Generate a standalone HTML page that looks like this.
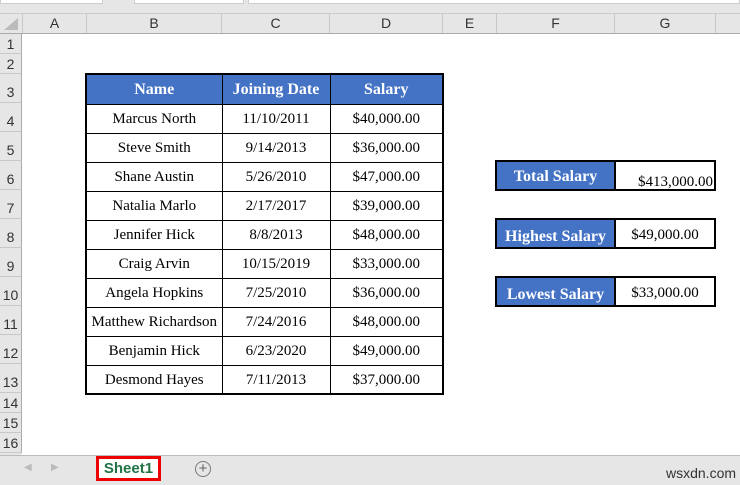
<!DOCTYPE html>
<html><head><style>
*{margin:0;padding:0;box-sizing:border-box}
body{width:740px;height:485px;overflow:hidden;background:#fff;position:relative;font-family:"Liberation Sans",sans-serif}
.a{position:absolute}
.ch{position:absolute;top:14px;height:19px;font-size:14px;color:#333;text-align:center;line-height:19px;border-right:1px solid #c8c8c8}
.rh{position:absolute;left:0;width:22px;font-size:14px;color:#333;text-align:center;border-bottom:1px solid #c8c8c8;background:#e6e6e6;border-right:1px solid #aaa}
table{border-collapse:collapse;position:absolute;font-family:"Liberation Serif",serif;font-size:15px}
td{border:1px solid #000;text-align:center;padding:2px 0 0}
th{background:#4472c4;color:#fff;font-weight:bold;font-size:16px;border:1px solid #000;padding-top:2px}
.box{position:absolute;left:495px;width:221px;border:2px solid #000;display:flex;font-family:"Liberation Serif",serif}
.box .l{width:119px;background:#4472c4;color:#fff;font-weight:bold;font-size:16px;text-align:center;border-right:2px solid #000}
.box .v{flex:1;font-size:15px;text-align:center}
</style></head><body>
<div class="a" style="left:0;top:0;width:740px;height:14px;background:#e6e6e6;border-bottom:1px solid #ccc"></div>
<div class="a" style="left:0;top:0;width:103px;height:4px;background:#fff;border:1px solid #ccc;border-top:none"></div>
<div class="a" style="left:134px;top:0;width:110px;height:4px;background:#fff;border:1px solid #ccc;border-top:none"></div>
<div class="a" style="left:248px;top:0;width:492px;height:4px;background:#fff;border:1px solid #ccc;border-top:none"></div>
<div class="a" style="left:0;top:14px;width:740px;height:20px;background:#e6e6e6;border-bottom:1px solid #aaa"></div>
<div class="a" style="left:4px;top:18px;width:0;height:0;border-left:14px solid transparent;border-bottom:12px solid #bbb"></div>
<div class="ch" style="left:0;width:23px"></div>
<div class="ch" style="left:23px;width:64px">A</div>
<div class="ch" style="left:87px;width:135px">B</div>
<div class="ch" style="left:222px;width:108px">C</div>
<div class="ch" style="left:330px;width:113px">D</div>
<div class="ch" style="left:443px;width:54px">E</div>
<div class="ch" style="left:497px;width:118px">F</div>
<div class="ch" style="left:615px;width:101px">G</div>
<div class="rh" style="top:34px;height:20px;line-height:20px">1</div>
<div class="rh" style="top:54px;height:20px;line-height:20px">2</div>
<div class="rh" style="top:74px;height:29px;line-height:36px">3</div>
<div class="rh" style="top:103px;height:29px;line-height:36px">4</div>
<div class="rh" style="top:132px;height:29px;line-height:36px">5</div>
<div class="rh" style="top:161px;height:29px;line-height:36px">6</div>
<div class="rh" style="top:190px;height:29px;line-height:36px">7</div>
<div class="rh" style="top:219px;height:29px;line-height:36px">8</div>
<div class="rh" style="top:248px;height:29px;line-height:36px">9</div>
<div class="rh" style="top:277px;height:29px;line-height:36px">10</div>
<div class="rh" style="top:306px;height:29px;line-height:36px">11</div>
<div class="rh" style="top:335px;height:29px;line-height:36px">12</div>
<div class="rh" style="top:364px;height:29px;line-height:36px">13</div>
<div class="rh" style="top:393px;height:20px;line-height:20px">14</div>
<div class="rh" style="top:413px;height:20px;line-height:20px">15</div>
<div class="rh" style="top:433px;height:20px;line-height:20px">16</div>
<div class="rh" style="top:453px;height:3px;border:none"></div>
<table style="left:85px;top:73px;width:359px;border:2px solid #000">
<tr style="height:30px"><th style="width:136px">Name</th><th style="width:108px">Joining Date</th><th>Salary</th></tr>
<tr style="height:29px"><td>Marcus North</td><td>11/10/2011</td><td>$40,000.00</td></tr>
<tr style="height:29px"><td>Steve Smith</td><td>9/14/2013</td><td>$36,000.00</td></tr>
<tr style="height:29px"><td>Shane Austin</td><td>5/26/2010</td><td>$47,000.00</td></tr>
<tr style="height:29px"><td>Natalia Marlo</td><td>2/17/2017</td><td>$39,000.00</td></tr>
<tr style="height:29px"><td>Jennifer Hick</td><td>8/8/2013</td><td>$48,000.00</td></tr>
<tr style="height:29px"><td>Craig Arvin</td><td>10/15/2019</td><td>$33,000.00</td></tr>
<tr style="height:29px"><td>Angela Hopkins</td><td>7/25/2010</td><td>$36,000.00</td></tr>
<tr style="height:29px"><td>Matthew Richardson</td><td>7/24/2016</td><td>$48,000.00</td></tr>
<tr style="height:29px"><td>Benjamin Hick</td><td>6/23/2020</td><td>$49,000.00</td></tr>
<tr style="height:29px"><td>Desmond Hayes</td><td>7/11/2013</td><td>$37,000.00</td></tr>
</table>
<div class="box" style="top:160px;height:31px"><div class="l" style="line-height:30px">Total Salary</div><div class="v" style="text-align:right;padding-right:1px;line-height:40px">$413,000.00</div></div>
<div class="box" style="top:218px;height:31px"><div class="l" style="line-height:33px">Highest Salary</div><div class="v" style="line-height:30px">$49,000.00</div></div>
<div class="box" style="top:276px;height:31px"><div class="l" style="line-height:33px">Lowest Salary</div><div class="v" style="line-height:30px">$33,000.00</div></div>
<div class="a" style="left:0;top:455px;width:740px;height:30px;background:#e6e6e6;border-top:1px solid #bbb"></div>
<div class="a" style="left:24px;top:462px;font-size:10px;color:#bbb">&#9664;</div>
<div class="a" style="left:51px;top:462px;font-size:10px;color:#bbb">&#9654;</div>
<div class="a" style="left:96px;top:456px;width:65px;height:25px;background:#fff;border:3px solid #e00;color:#217346;font-weight:bold;font-size:15px;text-align:center;line-height:19px">Sheet1</div>
<div class="a" style="left:195px;top:461px;width:16px;height:16px;border:1.5px solid #777;border-radius:50%;color:#666;font-size:15px;line-height:13px;text-align:center">+</div>
<div class="a" style="left:666px;top:465px;font-size:14px;color:#333">wsxdn.com</div>
</body></html>
